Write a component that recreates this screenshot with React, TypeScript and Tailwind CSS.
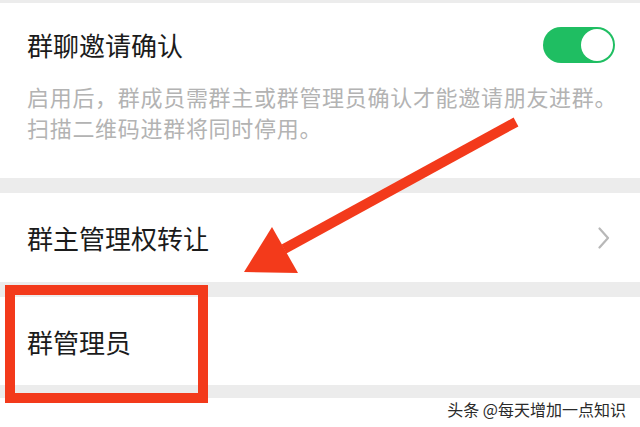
import React from "react";

const Toggle = () => (
  <div className="relative h-[36px] w-[72px] rounded-full bg-[#1fbe62]">
    <div className="absolute right-[2px] top-[2px] h-[32px] w-[32px] rounded-full bg-white" />
  </div>
);

const Chevron = () => (
  <svg width="12" height="22" viewBox="0 0 12 22" fill="none">
    <path d="M1.5 1.5 L10 11 L1.5 20.5" stroke="#b8b8b8" strokeWidth="2.2" strokeLinecap="round" strokeLinejoin="round" />
  </svg>
);

export default function App() {
  return (
    <div
      className="relative h-[427px] w-[640px] overflow-hidden bg-white"
      style={{ fontFamily: '"Noto Sans CJK SC", "Noto Sans", sans-serif' }}
    >
      <div className="h-[3px] bg-[#ececec]" />

      <div className="h-[175px] px-[27px] pt-[24px]">
        <div className="flex items-center justify-between">
          <span className="text-[26px] leading-[36px] text-[#1b1b1b]">群聊邀请确认</span>
          <div className="mr-[-2px]">
            <Toggle />
          </div>
        </div>
        <p className="mt-[18px] whitespace-nowrap text-[22px] leading-[31px] tracking-[0.7px] text-[#b3b3b3]">
          启用后，群成员需群主或群管理员确认才能邀请朋友进群。
          <br />
          扫描二维码进群将同时停用。
        </p>
      </div>

      <div className="h-[15px] bg-[#ececec]" />

      <div className="flex h-[89px] items-center justify-between pl-[27px] pr-[30px]">
        <span className="text-[26px] text-[#1b1b1b]">群主管理权转让</span>
        <Chevron />
      </div>

      <div className="h-[15px] bg-[#ececec]" />

      <div className="flex h-[88px] items-center pl-[27px]">
        <span className="text-[26px] text-[#1b1b1b]">群管理员</span>
      </div>

      <div className="h-[13px] bg-[#ececec]" />

      <div className="flex justify-end pr-[14px] pt-[1px]">
        <span
          className="text-[16px] leading-[20px] text-[#2a2a2a]"
          style={{ textShadow: "0 0 2px #fff, 1px 1px 0 #fff" }}
        >
          头条 @每天增加一点知识
        </span>
      </div>

      {/* red highlight box */}
      <div className="absolute left-[5px] top-[285px] h-[118px] w-[203px] border-[10px] border-[#f33a1b]" />

      {/* red arrow */}
      <svg className="absolute left-0 top-0" width="640" height="427" viewBox="0 0 640 427">
        <line x1="516" y1="122" x2="284" y2="249" stroke="#f33a1b" strokeWidth="10" />
        <polygon points="244,272 272,227 298,273" fill="#f33a1b" />
      </svg>
    </div>
  );
}
